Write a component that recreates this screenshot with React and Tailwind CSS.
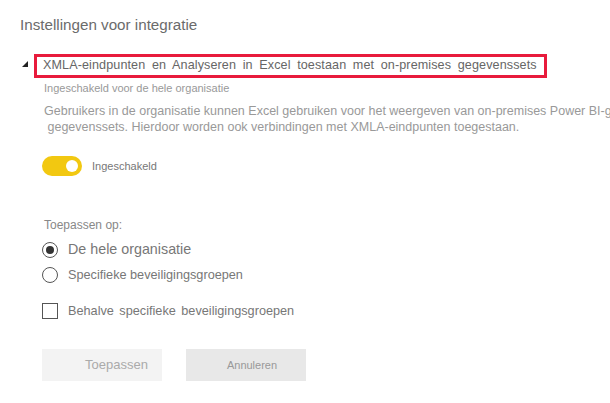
import React, { useState } from "react";

function Toggle({ on }) {
  return (
    <div className={`flex h-[20px] w-[40px] items-center rounded-full px-[4px] ${on ? "justify-end bg-[#f2c811]" : "justify-start bg-[#c8c8c8]"}`}>
      <div className="h-[12px] w-[12px] rounded-full bg-white" />
    </div>
  );
}

function Radio({ checked, label, className }) {
  return (
    <div className="flex items-center">
      <div className="flex h-[16px] w-[16px] items-center justify-center rounded-full border border-[#555]">
        {checked && <div className="h-[8px] w-[8px] rounded-full bg-[#333]" />}
      </div>
      <span className={`ml-[10px] text-[#777] ${className}`}>{label}</span>
    </div>
  );
}

export default function App() {
  const [scope] = useState("org");
  return (
    <div className="h-[403px] w-[610px] overflow-hidden bg-white font-['Liberation_Sans',Arial,sans-serif]">
      <div className="pl-[20px] pt-[14px] text-[15.2px] text-[#6b6b6b]">Instellingen voor integratie</div>

      <div className="mt-[17px] flex items-start">
        <div className="ml-[22px] mt-[7px] h-0 w-0 border-b-[6px] border-l-[6px] border-b-[#222] border-l-transparent" />
        <div className="ml-[6px] flex h-[24px] w-[513px] items-center border-[3px] border-[#e81b3c] pl-[6px] text-[12.6px] tracking-[0.1px] text-[#666] [word-spacing:3px]">
          XMLA-eindpunten en Analyseren in Excel toestaan met on-premises gegevenssets
        </div>
      </div>
      <div className="pl-[44px] pt-[2px] text-[11px] text-[#999]">Ingeschakeld voor de hele organisatie</div>

      <div className="mt-[7px] overflow-hidden whitespace-nowrap pl-[44px] text-[12.5px] leading-[16px] text-[#999]">
        <div>Gebruikers in de organisatie kunnen Excel gebruiken voor het weergeven van on-premises Power BI-gegevenssets.</div>
        <div>&nbsp;gegevenssets. Hierdoor worden ook verbindingen met XMLA-eindpunten toegestaan.</div>
      </div>

      <div className="mt-[21px] flex items-center pl-[42px]">
        <Toggle on />
        <span className="ml-[10px] text-[11px] text-[#777]">Ingeschakeld</span>
      </div>

      <div className="mt-[40px] pl-[44px] text-[12px] text-[#888]">Toepassen op:</div>
      <div className="mt-[5px] flex flex-col gap-[5px] pl-[42px]">
        <Radio checked={scope === "org"} label="De hele organisatie" className="text-[14.3px]" />
        <Radio checked={scope === "groups"} label="Specifieke beveiligingsgroepen" className="text-[12.7px]" />
      </div>

      <div className="mt-[17px] flex items-center pl-[42px]">
        <div className="h-[16px] w-[16px] border border-[#555]" />
        <span className="ml-[10px] text-[12.7px] text-[#777] [word-spacing:2px]">Behalve specifieke beveiligingsgroepen</span>
      </div>

      <div className="mt-[28px] flex gap-[24px] pl-[42px]">
        <button className="flex h-[32px] w-[120px] items-center justify-end bg-[#f3f3f3] pr-[14px] text-[13px] text-[#aaa]">Toepassen</button>
        <button className="flex h-[32px] w-[120px] items-center justify-center bg-[#e8e8e8] pl-[12px] text-[11px] text-[#999]">Annuleren</button>
      </div>
    </div>
  );
}
